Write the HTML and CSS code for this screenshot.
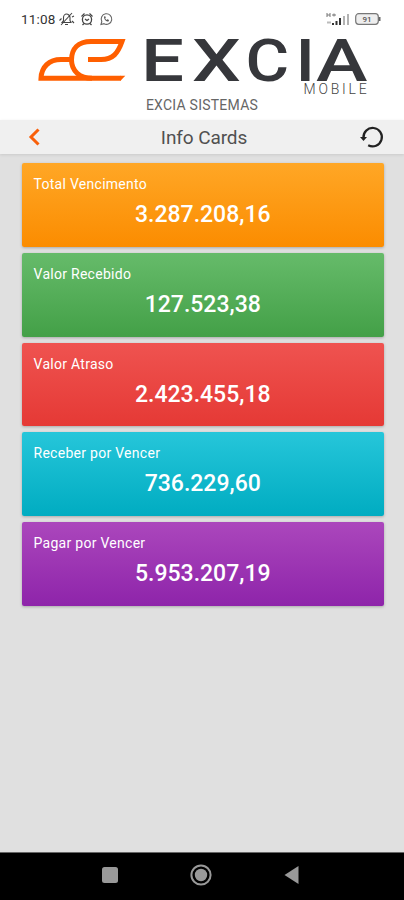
FILE: index.html
```html
<!DOCTYPE html>
<html lang="pt-BR">
<head>
<meta charset="utf-8">
<title>Info Cards</title>
<link rel="stylesheet" href="styles.css">
</head>
<body>
<header class="brand">
  <div class="status">
    <span class="clock">11:08</span>
    <svg class="alerts" width="58" height="16" viewBox="0 0 58 16" fill="none" stroke="#444" stroke-width="1.3">
      <path d="M4 11.5l1.5-2V6.5c0-2 1.500-3.500 3-3.500s3.500 1.500 3.500 3.500v3l1 2zM7 13.500h3M3 14L14 2M1.500 9.500l2-2M14 6l2-1M14 10l2 2" stroke-width="1.100"/>
      <circle cx="29" cy="8.500" r="4.600"/><path d="M23.500 5.500l3-3M31.500 2.500l3 3M27 8l2 1.500L31 8M26 12.500l-1.500 1.500M32 12.500l1.500 1.500"/>
      <path d="M43 13.500l.8-3a5.300 5.300 0 1 1 2.200 2.200z" stroke="#666" stroke-width="1.100"/><path d="M46 5.500c0 3 2 5 4.500 5l.5-1.500-1.500-.8-1 .7c-.7-.5-1.100-1-1.300-1.700l.6-.8-.6-1.200z" fill="#555" stroke="none"/>
    </svg>
    <svg class="signal" width="56" height="16" viewBox="0 0 56 16">
      <path d="M1 2v4M4 2v4M1 4h3M6 4h4M8 2.500v3" stroke="#777" fill="none"/>
      <path d="M1 11.500h4" stroke="#bbb" stroke-width="2"/>
      <path d="M7 14v-2M10.500 14v-4M14 14V7" stroke="#333" stroke-width="2"/>
      <path d="M18 14V5M22 14V3" stroke="#aaa" stroke-width="1.800"/>
      <rect x="29.700" y="2.700" width="22.600" height="10.600" rx="3" fill="#eee" stroke="#777" stroke-width="1.200"/>
      <path d="M53.500 6v4" stroke="#666" stroke-width="2"/>
      <text class="battery" x="41" y="10.900" text-anchor="middle">91</text>
    </svg>
  </div>
  <svg class="logo" width="404" height="60" viewBox="0 0 404 60">
    <g fill="none" stroke="#ff5f00" stroke-width="5">
      <path d="M88 23.500H101C113 23.500 118 17 122 5.500H91C78 5.500 71.500 13 71.500 24C71.500 35 80 42.300 92 42.300H121"/>
      <path d="M71 23.500H61C49 23.500 41.500 31 41 42.300H92"/>
    </g>
    <path d="M120.500 39.800h4.800l-4.800 5z" fill="#ff5f00"/>
    <text class="word" y="45"><tspan x="141" textLength="43" lengthAdjust="spacingAndGlyphs">E</tspan><tspan x="192" textLength="48.800" lengthAdjust="spacingAndGlyphs">X</tspan><tspan x="245.400" textLength="43.600" lengthAdjust="spacingAndGlyphs">C</tspan><tspan x="295.500" textLength="19.500" lengthAdjust="spacingAndGlyphs">I</tspan><tspan x="316" textLength="51.500" lengthAdjust="spacingAndGlyphs">A</tspan></text>
    <text class="mobile" x="303.500" y="58">MOBILE</text>
  </svg>
  <div class="company">EXCIA SISTEMAS</div>
</header>
<nav class="toolbar">
  <svg width="24" height="24" viewBox="0 0 24 24" fill="none" stroke="#f9600b" stroke-width="3"><path d="M16.500 4.500L9 12L16.500 19.500"/></svg>
  <h1>Info Cards</h1>
  <svg width="24" height="24" viewBox="0 0 24 24" fill="none" stroke="#222" stroke-width="2.200"><path d="M3.500 13A9.200 9.200 0 1 1 8.200 20.200"/><path d="M0 12h7l-3.500 4z" fill="#222" stroke="none"/></svg>
</nav>
<main class="cards">
  <section class="card orange"><h2>Total Vencimento</h2><p>3.287.208,16</p></section>
  <section class="card green"><h2>Valor Recebido</h2><p>127.523,38</p></section>
  <section class="card red"><h2>Valor Atraso</h2><p>2.423.455,18</p></section>
  <section class="card cyan"><h2>Receber por Vencer</h2><p>736.229,60</p></section>
  <section class="card purple"><h2>Pagar por Vencer</h2><p>5.953.207,19</p></section>
</main>
<footer class="system">
  <svg width="24" height="24" viewBox="0 0 24 24"><rect x="4" y="4" width="16" height="16" rx="2.500" fill="#999"/></svg>
  <svg width="24" height="24" viewBox="0 0 24 24"><circle cx="12" cy="12" r="9.600" fill="none" stroke="#999" stroke-width="2"/><circle cx="12" cy="12" r="6.200" fill="#999"/></svg>
  <svg width="24" height="24" viewBox="0 0 24 24"><path d="M4.500 12L18.500 3v18z" fill="#999"/></svg>
</footer>
</body>
</html>
```
FILE: styles.css
```css
* { box-sizing: border-box; }
body {
  margin: 0;
  width: 404px;
  height: 900px;
  display: flex;
  flex-direction: column;
  background: #e0e0e0;
  font-family: Roboto, sans-serif;
  overflow: hidden;
}
h1, h2, p { margin: 0; }
svg { display: block; }
.brand { height: 120px; background: #fff; flex: none; }
.status {
  height: 36px;
  padding: 11px 22px 0 21px;
  display: flex;
  align-items: flex-start;
}
.clock { width: 37px; font-size: 13.5px; line-height: 17px; color: #333; letter-spacing: .2px; }
.signal { margin-left: auto; }
.battery { font: 500 8px Roboto, sans-serif; fill: #555; }
.logo { overflow: visible; }
.word { font: 500 59px Roboto, sans-serif; fill: #36373b; }
.mobile { font: 300 14px Roboto, sans-serif; letter-spacing: 2.8px; fill: #444; }
.company { text-align: center; font-size: 14px; line-height: 18px; color: #666; letter-spacing: .25px; }
.toolbar {
  height: 34px;
  flex: none;
  display: flex;
  align-items: center;
  justify-content: space-between;
  padding: 0 20px 0 22px;
  background: #f0f0f0;
  box-shadow: 0 1px 3px rgba(0,0,0,.1);
}
.toolbar h1 { font-size: 19px; font-weight: 400; line-height: 24px; padding: 1px 0 0 2px; color: #505050; letter-spacing: -.1px; }
.cards {
  flex: 1;
  display: flex;
  flex-direction: column;
  gap: 6px;
  padding: 9px 20px 0 21.5px;
}
.card {
  height: 83.8px;
  padding: 12px;
  border-radius: 2px;
  color: #fff;
  box-shadow: 0 1px 3px rgba(0,0,0,.25);
}
.card h2 { font-size: 14px; font-weight: 400; line-height: 18px; letter-spacing: .28px; }
.card p { margin-top: 8px; font-size: 23px; font-weight: 500; line-height: 28px; text-align: center; }
.orange { background: linear-gradient(#ffa726, #fb8c00); }
.green { background: linear-gradient(#66bb6a, #43a047); }
.red { background: linear-gradient(#ef5350, #e53935); }
.cyan { background: linear-gradient(#26c6da, #00acc1); }
.purple { background: linear-gradient(#ab47bc, #8e24aa); }
.system {
  height: 48px;
  flex: none;
  display: flex;
  justify-content: center;
  align-items: center;
  gap: 67px;
  background: #000;
  padding: 0 2px 4px 0;
  border-top: 1px solid #666;
}
```
